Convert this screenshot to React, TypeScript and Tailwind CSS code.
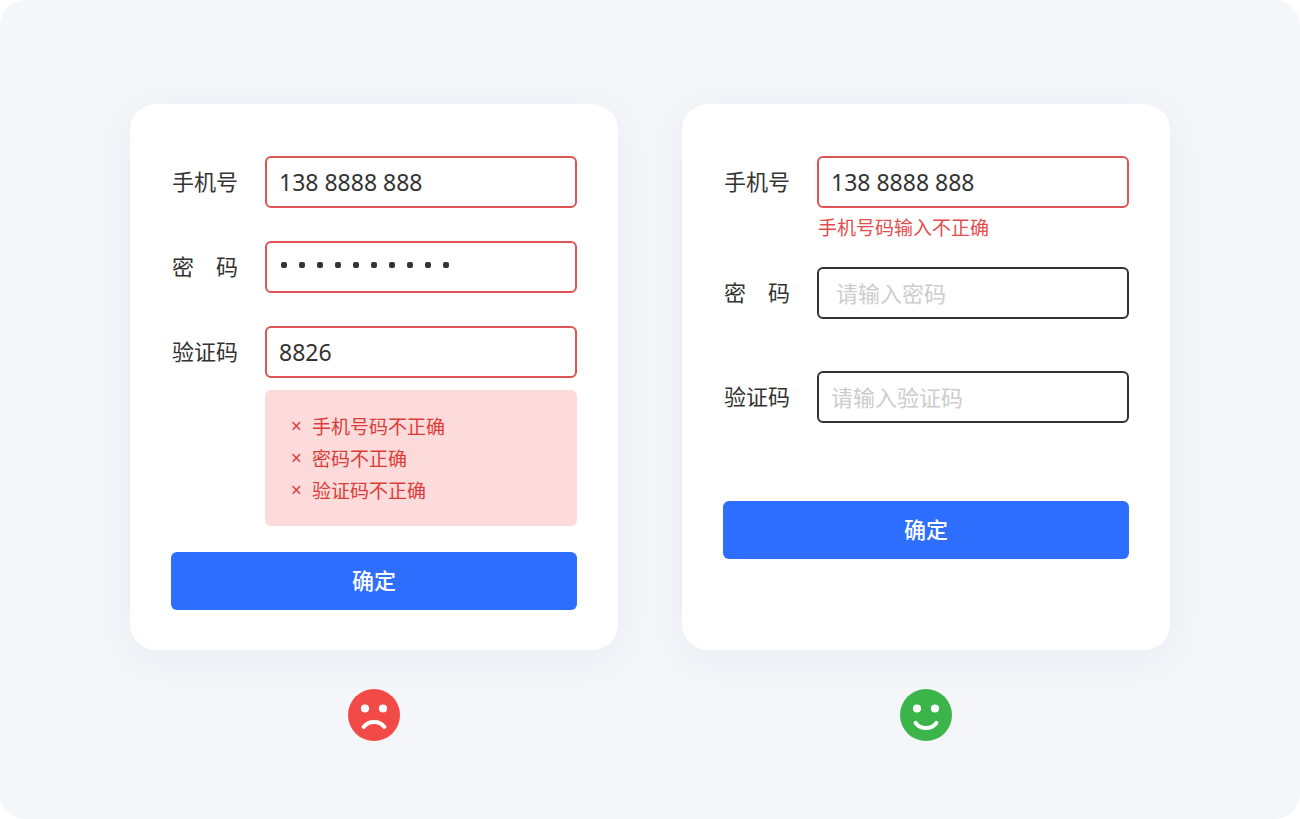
import { useId, useState } from "react";
import type { ReactNode } from "react";

type FieldProps = {
  label: string;
  type?: "text" | "password";
  initial?: string;
  placeholder?: string;
  invalid?: boolean;
  error?: string;
};

function PasswordMask({ length }: { length: number }) {
  return (
    <span
      aria-hidden="true"
      className="pointer-events-none absolute inset-y-0 left-4 flex items-center gap-3 pb-1"
    >
      {Array.from({ length }, (_, i) => (
        <span key={i} className="size-[6px] rounded-[2px] bg-[#333333]" />
      ))}
    </span>
  );
}

function Field({ label, type = "text", initial = "", placeholder, invalid = false, error }: FieldProps) {
  const id = useId();
  const [value, setValue] = useState(initial);
  const masked = type === "password";
  const color = masked ? "text-transparent" : "text-[#333333]";
  const border = invalid ? "border-[#dd5552]" : "border-[#333333]";

  return (
    <div className="grid grid-cols-[94px_1fr] items-center">
      <label htmlFor={id} className="pb-1 pl-px whitespace-pre text-[22px] leading-8 text-[#333333]">
        {label}
      </label>
      <div className="relative">
        <input
          id={id}
          type={type}
          value={value}
          placeholder={placeholder}
          aria-invalid={invalid}
          autoComplete="off"
          onChange={(e) => setValue(e.target.value)}
          className={`block h-[52px] w-full min-w-0 rounded-md border-2 bg-white px-3 font-['Noto_Sans','Noto_Sans_CJK_SC',sans-serif] text-[23px] caret-[#333333] outline-none placeholder:font-['Noto_Sans_CJK_SC',sans-serif] placeholder:text-[22px] placeholder:text-[#cccccc] ${color} ${border}`}
        />
        {masked && <PasswordMask length={value.length} />}
      </div>
      {error && (
        <p role="alert" className="col-start-2 mt-[3px] mb-px pl-px text-[19px] leading-8 text-[#e34d4b]">
          {error}
        </p>
      )}
    </div>
  );
}

function SubmitButton() {
  return (
    <button
      type="submit"
      className="h-[58px] w-full cursor-pointer rounded-md bg-[#2d6eff] pb-[3px] text-[22px] font-medium text-white"
    >
      确定
    </button>
  );
}

function FormCard({ children }: { children: ReactNode }) {
  return (
    <form
      onSubmit={(e) => e.preventDefault()}
      className="w-full grow rounded-[26px] bg-white px-[41px] pt-[52px] pb-10 shadow-[0_8px_40px_rgba(40,40,80,0.05)]"
    >
      {children}
    </form>
  );
}

function Face({ happy }: { happy: boolean }) {
  return (
    <svg
      viewBox="0 0 52 52"
      role="img"
      aria-label={happy ? "推荐" : "不推荐"}
      className="size-[52px]"
    >
      <circle cx="26" cy="26" r="26" fill={happy ? "#3bb54a" : "#f24a47"} />
      <circle cx="17" cy="19.5" r="4.1" fill="#ffffff" />
      <circle cx="35" cy="19.5" r="4.1" fill="#ffffff" />
      <path
        d={happy ? "M15.6 33.8C20.5 40.8 31.5 40.8 36.4 33.8" : "M15.6 38C20.5 31.2 31.5 31.2 36.4 38"}
        fill="none"
        stroke="#ffffff"
        strokeWidth="4"
        strokeLinecap="round"
      />
    </svg>
  );
}

const errors = ["手机号码不正确", "密码不正确", "验证码不正确"];

export default function App() {
  return (
    <div className="min-h-screen bg-white font-['Noto_Sans_CJK_SC',sans-serif]">
      <main className="grid min-h-screen grid-cols-2 items-stretch gap-16 rounded-[26px] bg-[#f4f6fa] px-[10%] pt-[104px] pb-[78px]">
        <section className="flex flex-col items-center gap-[39px]">
          <FormCard>
            <div className="flex flex-col gap-[33px]">
              <Field label="手机号" initial="138 8888 888" invalid />
              <Field label="密　码" type="password" initial="8888888888" invalid />
              <Field label="验证码" initial="8826" invalid />
            </div>
            <ul
              role="alert"
              className="mt-3 mb-[26px] ml-[94px] rounded-md bg-[#fddbdb] px-[26px] py-5 text-[19px] leading-8 text-[#dc3b38]"
            >
              {errors.map((text) => (
                <li key={text} className="flex gap-[10px]">
                  <span className="font-['Noto_Sans',sans-serif]">×</span>
                  {text}
                </li>
              ))}
            </ul>
            <SubmitButton />
          </FormCard>
          <Face happy={false} />
        </section>

        <section className="flex flex-col items-center gap-[39px]">
          <FormCard>
            <Field label="手机号" initial="138 8888 888" invalid error="手机号码输入不正确" />
            <div className="mt-[23px] mb-[78px] flex flex-col gap-[52px]">
              <Field label="密　码" type="password" placeholder=" 请输入密码" />
              <Field label="验证码" placeholder="请输入验证码" />
            </div>
            <SubmitButton />
          </FormCard>
          <Face happy />
        </section>
      </main>
    </div>
  );
}
